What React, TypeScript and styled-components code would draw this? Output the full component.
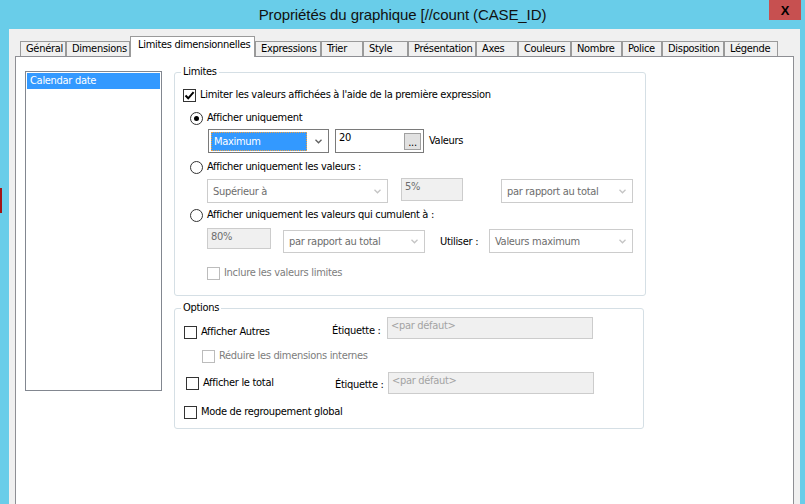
import styled, { createGlobalStyle } from 'styled-components';

const GlobalStyle = createGlobalStyle`
  html, body {
    margin: 0;
    padding: 0;
    overflow: hidden;
    background: #ffffff;
  }
`;

const UI_FONT = `"Liberation Sans Narrow", "DejaVu Sans Condensed", "Liberation Sans", sans-serif`;

const tabs = [
  { label: 'Général', w: 46 },
  { label: 'Dimensions', w: 64 },
  { label: 'Limites dimensionnelles', w: 125, active: true },
  { label: 'Expressions', w: 66 },
  { label: 'Trier', w: 42 },
  { label: 'Style', w: 45 },
  { label: 'Présentation', w: 68 },
  { label: 'Axes', w: 42 },
  { label: 'Couleurs', w: 53 },
  { label: 'Nombre', w: 51 },
  { label: 'Police', w: 40 },
  { label: 'Disposition', w: 62 },
  { label: 'Légende', w: 54 },
];

const Chevron = ({ disabled }: { disabled?: boolean }) => (
  <svg width="7" height="5" viewBox="0 0 7 5">
    <path d="M0.5 0.8 L3.5 3.8 L6.5 0.8" fill="none" stroke={disabled ? '#c4c4c4' : '#606060'} strokeWidth="1.3" />
  </svg>
);

const Tick = () => (
  <svg width="11" height="11" viewBox="0 0 11 11">
    <path d="M1.5 5.5 L4.2 8.3 L9.6 2.2" fill="none" stroke="#000" strokeWidth="2" />
  </svg>
);

const Check = ({ checked, disabled }: { checked?: boolean; disabled?: boolean }) => (
  <CheckBox $disabled={disabled}>{checked && <Tick />}</CheckBox>
);

const Select = ({ w, h = 24, mt = 0, value, disabled, focused }: {
  w: number; h?: number; mt?: number; value: string; disabled?: boolean; focused?: boolean;
}) => (
  <SelectBox $w={w} $h={h} $mt={mt} $disabled={disabled}>
    {focused ? <Highlight>{value}</Highlight> : <SelectText>{value}</SelectText>}
    <ArrowZone>
      <Chevron disabled={disabled} />
    </ArrowZone>
  </SelectBox>
);

export default function App() {
  return (
    <>
      <GlobalStyle />
      <Window>
        <TitleBar>
          <span />
          <Title>Propriétés du graphique [//count (CASE_ID)</Title>
          <CloseButton>X</CloseButton>
        </TitleBar>
        <Client>
          <TabStrip>
            {tabs.map((t) => (
              <Tab key={t.label} $w={t.w} $active={t.active}>
                {t.label}
              </Tab>
            ))}
          </TabStrip>
          <Panel>
            <ListBox>
              <ListItem>Calendar date</ListItem>
            </ListBox>
            <Groups>
              <Group>
                <Legend>Limites</Legend>
                <Line $mt={8} $ml={8}>
                  <Check checked />
                  <Label>Limiter les valeurs affichées à l'aide de la première expression</Label>
                </Line>
                <Line $mt={7} $ml={15}>
                  <Radio $checked />
                  <Label>Afficher uniquement</Label>
                </Line>
                <Controls $mt={3} $ml={33}>
                  <Select w={121} value="Maximum" focused />
                  <TextBox $w={89} $h={24} $ml={6}>
                    <BoxText>20</BoxText>
                    <DotsButton>...</DotsButton>
                  </TextBox>
                  <FieldLabel $ml={5} $mt={5}>Valeurs</FieldLabel>
                </Controls>
                <Line $mt={6} $ml={15}>
                  <Radio />
                  <Label>Afficher uniquement les valeurs :</Label>
                </Line>
                <Controls $mt={3} $ml={32}>
                  <Select w={181} mt={1} value="Supérieur à" disabled />
                  <TextBox $w={62} $h={23} $ml={13} $disabled>
                    <BoxText>5%</BoxText>
                  </TextBox>
                  <Spacer $w={38} />
                  <Select w={132} mt={1} value="par rapport au total" disabled />
                </Controls>
                <Line $mt={4} $ml={15}>
                  <Radio />
                  <Label>Afficher uniquement les valeurs qui cumulent à :</Label>
                </Line>
                <Controls $mt={5} $ml={32}>
                  <TextBox $w={64} $h={21} $disabled>
                    <BoxText>80%</BoxText>
                  </TextBox>
                  <Spacer $w={12} />
                  <Select w={142} h={23} mt={2} value="par rapport au total" disabled />
                  <FieldLabel $ml={15} $w={49} $mt={7}>Utiliser :</FieldLabel>
                  <Select w={144} mt={1} value="Valeurs maximum" disabled />
                </Controls>
                <Line $mt={12} $ml={32}>
                  <Check disabled />
                  <Label $disabled>Inclure les valeurs limites</Label>
                </Line>
                <GroupEnd $h={14} />
              </Group>

              <Group $mt={5} $w={470}>
                <Legend>Options</Legend>
                <Controls $mt={2} $ml={9}>
                  <CheckCell $w={148} $pt={4}>
                    <Check />
                    <Label>Afficher Autres</Label>
                  </CheckCell>
                  <FieldLabel $w={55} $mt={7}>Étiquette :</FieldLabel>
                  <TextBox $w={206} $h={22} $disabled>
                    <BoxText $muted>&lt;par défaut&gt;</BoxText>
                  </TextBox>
                </Controls>
                <Line $mt={8} $ml={27}>
                  <Check disabled />
                  <Label $disabled>Réduire les dimensions internes</Label>
                </Line>
                <Controls $mt={8} $ml={11}>
                  <CheckCell $w={149} $pt={0}>
                    <Check />
                    <Label>Afficher le total</Label>
                  </CheckCell>
                  <FieldLabel $w={53} $mt={6}>Étiquette :</FieldLabel>
                  <TextBox $w={206} $h={22} $disabled>
                    <BoxText $muted>&lt;par défaut&gt;</BoxText>
                  </TextBox>
                </Controls>
                <Line $mt={10} $ml={9}>
                  <Check />
                  <Label>Mode de regroupement global</Label>
                </Line>
                <GroupEnd $h={8} />
              </Group>
            </Groups>
          </Panel>
        </Client>
      </Window>
    </>
  );
}

const Window = styled.div`
  width: 805px;
  height: 504px;
  overflow: hidden;
  display: flex;
  flex-direction: column;
  background: linear-gradient(#a31515, #a31515) 0 188px / 2px 25px no-repeat, #69cde9;
  font-family: ${UI_FONT};
  font-size: 11px;
  letter-spacing: -0.3px;
  color: #000;
`;

const TitleBar = styled.div`
  height: 29px;
  flex: none;
  display: grid;
  grid-template-columns: 1fr auto 1fr;
`;

const Title = styled.div`
  font-family: "Liberation Sans", Arial, sans-serif;
  font-size: 15px;
  letter-spacing: -0.1px;
  line-height: 29px;
  color: #111;
  white-space: nowrap;
`;

const CloseButton = styled.div`
  justify-self: end;
  align-self: start;
  width: 32px;
  height: 20px;
  margin-right: 4px;
  background: #c75050;
  display: flex;
  align-items: center;
  justify-content: center;
  font-family: "Liberation Sans", Arial, sans-serif;
  font-weight: 700;
  font-size: 13px;
  letter-spacing: 0;
  color: #000;
`;

const Client = styled.div`
  flex: 1;
  margin: 0 5px 0 9px;
  padding: 0 6px;
  background: #f0f0f0;
  display: flex;
  flex-direction: column;
`;

const TabStrip = styled.div`
  height: 27px;
  flex: none;
  padding-left: 5px;
  display: flex;
  align-items: flex-end;
`;

const Tab = styled.div<{ $w: number; $active?: boolean }>`
  box-sizing: border-box;
  width: ${({ $w }) => $w}px;
  height: ${({ $active }) => ($active ? 21 : 15)}px;
  margin-bottom: ${({ $active }) => ($active ? -1 : 0)}px;
  z-index: ${({ $active }) => ($active ? 1 : 0)};
  padding: ${({ $active }) => ($active ? '1px 0 0 7px' : '0 0 0 5px')};
  border: 1px solid #9a9a9a;
  border-bottom: none;
  background: ${({ $active }) => ($active ? '#ffffff' : '#f0f0f0')};
  line-height: 14px;
  white-space: nowrap;
  overflow: hidden;
`;

const Panel = styled.div`
  flex: 1;
  margin-bottom: -10px;
  background: #ffffff;
  border: 1px solid #8e8f94;
  display: flex;
  align-items: flex-start;
`;

const ListBox = styled.div`
  box-sizing: border-box;
  width: 137px;
  height: 320px;
  margin: 14px 0 0 9px;
  padding: 1px;
  border: 1px solid #828790;
`;

const ListItem = styled.div`
  height: 16px;
  padding-left: 3px;
  line-height: 16px;
  background: #3399ff;
  color: #ffffff;
`;

const Groups = styled.div`
  margin: 8px 0 0 12px;
  display: flex;
  flex-direction: column;
`;

const Group = styled.fieldset<{ $mt?: number; $w?: number }>`
  box-sizing: border-box;
  width: ${({ $w }) => $w ?? 472}px;
  margin: ${({ $mt }) => $mt ?? 0}px 0 0 0;
  padding: 0;
  min-width: 0;
  border: 1px solid #d5dfe5;
  border-radius: 3px;
  display: flex;
  flex-direction: column;
`;

const Legend = styled.legend`
  margin-left: 6px;
  padding: 0 2px;
  line-height: 14px;
`;

const GroupEnd = styled.div<{ $h: number }>`
  height: ${({ $h }) => $h}px;
`;

const Line = styled.div<{ $mt: number; $ml: number }>`
  height: 16px;
  margin: ${({ $mt, $ml }) => `${$mt}px 0 0 ${$ml}px`};
  display: flex;
  align-items: center;
  gap: 4px;
`;

const Controls = styled.div<{ $mt: number; $ml: number }>`
  margin: ${({ $mt, $ml }) => `${$mt}px 0 0 ${$ml}px`};
  display: flex;
  align-items: flex-start;
`;

const CheckCell = styled.div<{ $w: number; $pt: number }>`
  width: ${({ $w }) => $w}px;
  height: 16px;
  margin-top: ${({ $pt }) => $pt + 3}px;
  display: flex;
  align-items: center;
  gap: 4px;
`;

const Label = styled.span<{ $disabled?: boolean }>`
  white-space: nowrap;
  line-height: 16px;
  color: ${({ $disabled }) => ($disabled ? '#7d7d7d' : '#000')};
`;

const FieldLabel = styled.span<{ $ml?: number; $w?: number; $mt: number }>`
  flex: none;
  margin: ${({ $mt, $ml }) => `${$mt}px 0 0 ${$ml ?? 0}px`};
  width: ${({ $w }) => ($w ? `${$w}px` : 'auto')};
  line-height: 14px;
  white-space: nowrap;
`;

const Spacer = styled.div<{ $w: number }>`
  flex: none;
  width: ${({ $w }) => $w}px;
`;

const CheckBox = styled.div<{ $disabled?: boolean }>`
  box-sizing: border-box;
  flex: none;
  width: 13px;
  height: 13px;
  border: 1px solid ${({ $disabled }) => ($disabled ? '#bcbcbc' : '#333333')};
  background: #ffffff;
  display: flex;
  align-items: center;
  justify-content: center;
`;

const Radio = styled.div<{ $checked?: boolean }>`
  box-sizing: border-box;
  flex: none;
  width: 13px;
  height: 13px;
  border-radius: 50%;
  border: 1px solid #333333;
  background: #ffffff;
  display: flex;
  align-items: center;
  justify-content: center;

  &::after {
    content: '';
    width: 5px;
    height: 5px;
    border-radius: 50%;
    background: #000;
    display: ${({ $checked }) => ($checked ? 'block' : 'none')};
  }
`;

const SelectBox = styled.div<{ $w: number; $h: number; $mt: number; $disabled?: boolean }>`
  box-sizing: border-box;
  flex: none;
  width: ${({ $w }) => $w}px;
  height: ${({ $h }) => $h}px;
  margin-top: ${({ $mt }) => $mt}px;
  border: 1px solid ${({ $disabled }) => ($disabled ? '#cccccc' : '#7a7a7a')};
  background: #ffffff;
  color: ${({ $disabled }) => ($disabled ? '#6d6d6d' : '#000')};
  display: flex;
  align-items: center;
`;

const SelectText = styled.span`
  flex: 1;
  padding-left: 5px;
  white-space: nowrap;
  overflow: hidden;
`;

const Highlight = styled.span`
  box-sizing: border-box;
  flex: 1;
  height: 19px;
  margin-left: 2px;
  padding-left: 2px;
  border: 1px dotted #f0a040;
  background: #3399ff;
  color: #ffffff;
  line-height: 17px;
  white-space: nowrap;
`;

const ArrowZone = styled.div`
  flex: none;
  width: 20px;
  display: flex;
  justify-content: center;
  padding-left: 1px;
`;

const TextBox = styled.div<{ $w: number; $h: number; $ml?: number; $disabled?: boolean }>`
  box-sizing: border-box;
  flex: none;
  width: ${({ $w }) => $w}px;
  height: ${({ $h }) => $h}px;
  margin-left: ${({ $ml }) => $ml ?? 0}px;
  padding-right: 2px;
  border: 1px solid ${({ $disabled }) => ($disabled ? '#cccccc' : '#7a7a7a')};
  background: ${({ $disabled }) => ($disabled ? '#f0f0f0' : '#ffffff')};
  color: ${({ $disabled }) => ($disabled ? '#6d6d6d' : '#000')};
  display: flex;
  align-items: center;
`;

const BoxText = styled.span<{ $muted?: boolean }>`
  flex: 1;
  align-self: flex-start;
  padding: 1px 0 0 3px;
  line-height: 14px;
  white-space: nowrap;
  color: ${({ $muted }) => ($muted ? '#a3a3a3' : 'inherit')};
`;

const DotsButton = styled.div`
  box-sizing: border-box;
  flex: none;
  width: 17px;
  height: 17px;
  border: 1px solid #a0a0a0;
  background: #e1e1e1;
  display: flex;
  align-items: flex-end;
  justify-content: center;
  line-height: 12px;
  font-size: 11px;
`;
